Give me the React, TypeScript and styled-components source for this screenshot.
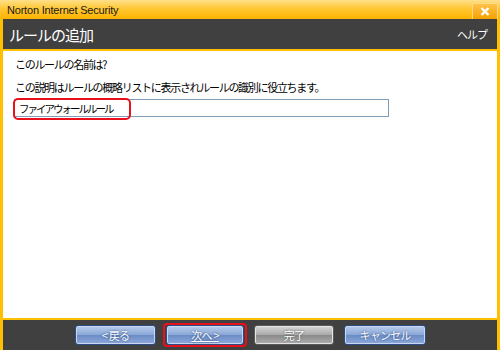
import styled, { createGlobalStyle } from "styled-components";

const Global = createGlobalStyle`
  body {
    margin: 0;
    background: #fff;
  }
`;

const Window = styled.div`
  width: 500px;
  height: 350px;
  display: flex;
  flex-direction: column;
  overflow: hidden;
  font-family: "Noto Sans CJK JP", "Liberation Sans", sans-serif;
`;

const TitleBar = styled.div`
  height: 19px;
  display: flex;
  align-items: center;
  justify-content: space-between;
  padding: 0 2px 0 7px;
  background: linear-gradient(#ffe08a 0%, #ffc733 45%, #ffb400 100%);
  font-family: "Liberation Sans", Arial, sans-serif;
  font-size: 11px;
  letter-spacing: -0.2px;
  color: #1a1a1a;
`;

const CloseBtn = styled.div`
  width: 24px;
  height: 15px;
  margin-top: 3px;
  display: flex;
  align-items: center;
  justify-content: center;
  border: 1px solid #ffd98a;
  border-bottom: none;
  border-radius: 2px 2px 0 0;
  background: linear-gradient(#ffc24a, #f5a200);
`;

const Frame = styled.div`
  flex: 1;
  display: flex;
  flex-direction: column;
  border-left: 3px solid #ffc000;
  border-right: 3px solid #ffc000;
`;

const Header = styled.div`
  height: 30px;
  display: flex;
  align-items: center;
  justify-content: space-between;
  padding: 0 10px 0 6px;
  background: #404040;
  border-bottom: 2px solid #ffc000;
  color: #fff;
`;

const Heading = styled.div`
  font-size: 15px;
  letter-spacing: -1px;
`;

const Help = styled.div`
  font-size: 11px;
  letter-spacing: -1px;
`;

const Content = styled.div`
  flex: 1;
  background: #fff;
  padding: 6px 0 0 12px;
  display: flex;
  flex-direction: column;
  font-size: 11px;
  color: #000;
`;

const Label = styled.div<{ $gap: number }>`
  line-height: 15px;
  margin-bottom: ${(p) => p.$gap}px;
  letter-spacing: -1.3px;
`;

const InputWrap = styled.div`
  position: relative;
  width: 375px;
  height: 18px;
  margin-left: -1px;
  border: 1px solid #7f9db9;
  display: flex;
  align-items: center;
  padding-left: 4px;
  box-sizing: border-box;
  font-size: 10.5px;
  letter-spacing: -2px;
`;

const Highlight = styled.div<{ $w: number }>`
  position: absolute;
  left: -2px;
  top: -2px;
  width: ${(p) => p.$w}px;
  height: 18px;
  border: 2px solid #e8101a;
  border-radius: 5px;
`;

const Footer = styled.div`
  height: 30px;
  background: #404040;
  border-top: 2px solid #ffc000;
  display: flex;
  align-items: center;
  padding-left: 72px;
  gap: 10px;
`;

const BtnSlot = styled.div`
  position: relative;
  display: flex;
`;

const Mark = styled.div`
  position: absolute;
  left: -3px;
  top: -2px;
  right: -3px;
  bottom: -2px;
  border: 2px solid #e8101a;
  border-radius: 4px;
`;

const Btn = styled.div<{ $gray?: boolean; $w: number }>`
  width: ${(p) => p.$w}px;
  height: 20px;
  box-sizing: border-box;
  border-radius: 3px;
  border: 1px solid ${(p) => (p.$gray ? "#5a5a5a" : "#2c4c86")};
  background: ${(p) =>
    p.$gray
      ? "linear-gradient(#d8d8d8 0%, #a8a8a8 50%, #8a8a8a 52%, #b0b0b0 100%)"
      : "linear-gradient(#b9cdec 0%, #89a6d6 50%, #6b8cc6 52%, #8eaadb 100%)"};
  box-shadow: inset 0 0 0 1px ${(p) => (p.$gray ? "#e4e4e4" : "#c9d8f0")};
  display: flex;
  align-items: center;
  justify-content: center;
  padding-bottom: 1px;
  color: #fff;
  font-size: 11px;
  letter-spacing: -0.8px;
  text-shadow: 0 0 2px ${(p) => (p.$gray ? "#444" : "#1d3b70")};
`;

const Under = styled.span`
  text-decoration: underline;
`;

export default function App() {
  return (
    <Window>
      <Global />
      <TitleBar>
        <span>Norton Internet Security</span>
        <CloseBtn>
          <svg width="10" height="9" viewBox="0 0 10 9">
            <path d="M1.5 1 L8.5 8 M8.5 1 L1.5 8" stroke="#fff" strokeWidth="2.4" />
          </svg>
        </CloseBtn>
      </TitleBar>
      <Frame>
        <Header>
          <Heading>ルールの追加</Heading>
          <Help>ヘルプ</Help>
        </Header>
        <Content>
          <Label $gap={8}>このルールの名前は?</Label>
          <Label $gap={4}>この説明はルールの概略リストに表示されルールの識別に役立ちます。</Label>
          <InputWrap>
            ファイアウォールルール
            <Highlight $w={114} />
          </InputWrap>
        </Content>
        <Footer>
          <BtnSlot>
            <Btn $w={81}>&lt; 戻る</Btn>
          </BtnSlot>
          <BtnSlot>
            <Btn $w={78}>
              <Under>次へ &gt;</Under>
            </Btn>
            <Mark />
          </BtnSlot>
          <BtnSlot>
            <Btn $w={80} $gray>完了</Btn>
          </BtnSlot>
          <BtnSlot>
            <Btn $w={82}>キャンセル</Btn>
          </BtnSlot>
        </Footer>
      </Frame>
    </Window>
  );
}
